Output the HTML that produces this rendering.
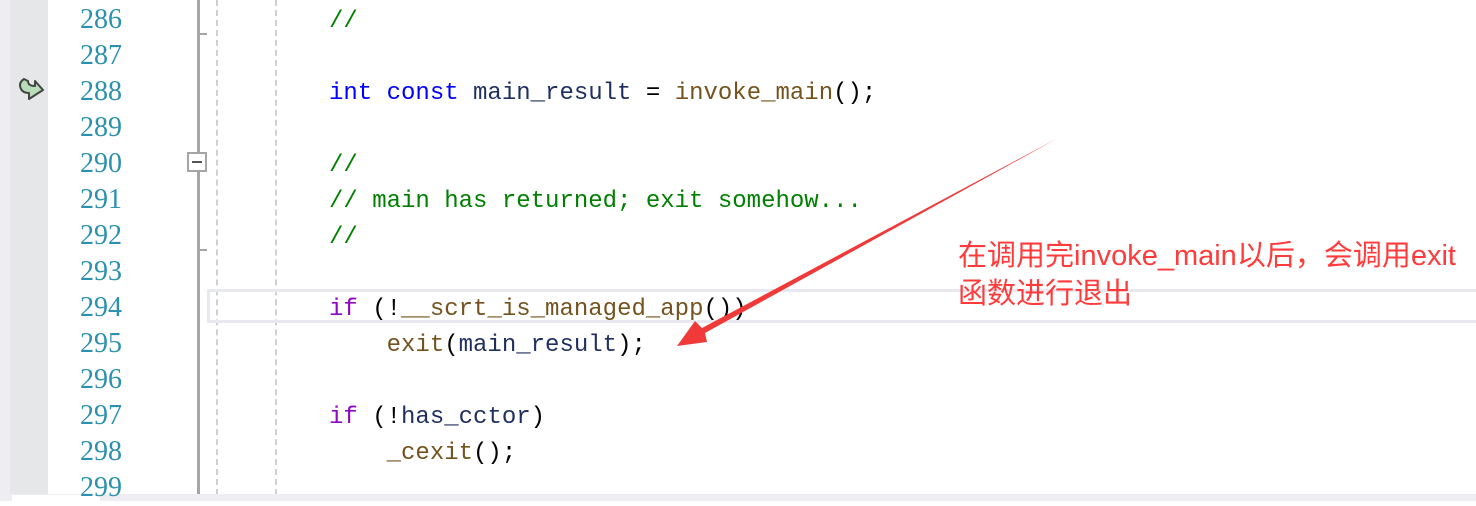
<!DOCTYPE html>
<html><head><meta charset="utf-8"><style>
html,body{margin:0;padding:0;}
body{width:1476px;height:501px;position:relative;overflow:hidden;background:#fff;font-family:"Liberation Mono","Noto Sans CJK SC",monospace;}
.g1{position:absolute;left:0;top:0;width:10px;height:501px;background:#eeeef2;}
.g2{position:absolute;left:10px;top:0;width:38px;height:501px;background:#e6e7e8;}
.ln{position:absolute;left:80px;font-size:28px;color:#2b91af;font-family:"Liberation Serif",serif;line-height:36px;}
.code{position:absolute;font-size:24px;line-height:36px;white-space:pre;color:#000;}
.k{color:#0000ff}.p{color:#8f08c4}.c{color:#008000}.f{color:#74531f}.v{color:#1f2f5f}
.anno{position:absolute;left:958px;font-family:"Liberation Sans","Noto Sans CJK SC",sans-serif;font-size:29px;color:#ff3b3b;line-height:38px;}
</style></head><body>
<div class="g1"></div><div class="g2"></div>
<div style="position:absolute;left:197px;top:0;width:3px;height:501px;background:#a5a5a5"></div>
<div style="position:absolute;left:197px;top:33px;width:10px;height:2px;background:#a5a5a5"></div>
<div style="position:absolute;left:197px;top:249px;width:10px;height:2px;background:#a5a5a5"></div>
<div style="position:absolute;left:187px;top:152px;width:20px;height:20px;border:2px solid #a5a5a5;background:#fff;box-sizing:border-box"><div style="position:absolute;left:3px;top:7px;width:10px;height:2px;background:#555"></div></div>
<div style="position:absolute;left:216px;top:0;width:0;height:495px;border-left:2px dashed #d0d0d0"></div>
<div style="position:absolute;left:275px;top:0;width:0;height:495px;border-left:2px dashed #d0d0d0"></div>
<div style="position:absolute;left:207px;top:289px;width:1280px;height:34px;border:3px solid #e8e8f0;box-sizing:border-box"></div>
<div style="position:absolute;left:0;top:494px;width:1476px;height:7px;background:#eeeef2"></div>
<div style="position:absolute;left:12px;top:495px;width:88px;height:6px;background:#fff"></div>
<svg style="position:absolute;left:16px;top:74px" width="32" height="30" viewBox="0 0 32 28"><path d="M8 4 Q2 8 5 14 Q7 18 13 18 L13 24 L27 15 L19 6 L19 11 Q12 11 12 6 Z" fill="#b9dcb9" stroke="#444" stroke-width="2" stroke-linejoin="round"/></svg>
<div class="ln" style="top:2px">286<br>287<br>288<br>289<br>290<br>291<br>292<br>293<br>294<br>295<br>296<br>297<br>298<br>299</div>
<div class="code" style="left:329px;top:4px"><span class="c">//</span>

<span class="k">int const</span> <span class="v">main_result</span> = <span class="f">invoke_main</span>();

<span class="c">//</span>
<span class="c">// main has returned; exit somehow...</span>
<span class="c">//</span>

<span class="p">if</span> (!<span class="f">__scrt_is_managed_app</span>())
    <span class="f">exit</span>(<span class="v">main_result</span>);

<span class="p">if</span> (!<span class="v">has_cctor</span>)
    <span class="f">_cexit</span>();</div>
<div class="anno" style="top:237px">在调用完invoke_main以后，会调用exit<br>函数进行退出</div>
<svg style="position:absolute;left:0;top:0" width="1476" height="501"><polygon points="1058,138 705,333 707,342 677,346 695,321 702,328" fill="#f03a3a"/></svg>
</body></html>
